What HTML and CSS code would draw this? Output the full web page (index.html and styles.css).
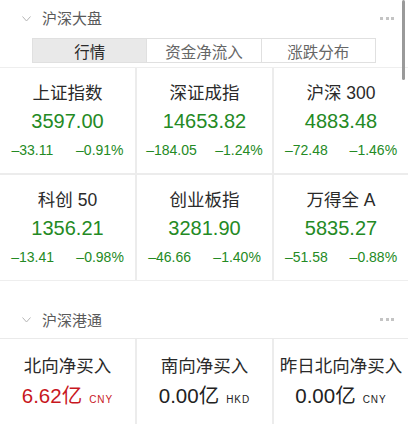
FILE: index.html
```html
<!DOCTYPE html>
<html lang="zh">
<head>
<meta charset="utf-8">
<link rel="stylesheet" href="styles.css">
</head>
<body>
<div class="page">
  <section class="panel">
    <div class="panel-head">
      <svg class="chev" width="9" height="6" viewBox="0 0 9 6"><polyline points="0.5,0.5 4.5,5 8.5,0.5" fill="none" stroke="#b5b5b5" stroke-width="1"/></svg>
      <span class="panel-title">沪深大盘</span>
      <span class="dots"><i></i><i></i><i></i></span>
    </div>
    <div class="tabs">
      <div class="tab tab--active">行情</div>
      <div class="tab">资金净流入</div>
      <div class="tab">涨跌分布</div>
    </div>
    <div class="grid">
      <div class="cell">
        <div class="cell-title">上证指数</div>
        <div class="cell-value down">3597.00</div>
        <div class="cell-change down"><span>–33.11</span><span>–0.91%</span></div>
      </div>
      <div class="cell">
        <div class="cell-title">深证成指</div>
        <div class="cell-value down">14653.82</div>
        <div class="cell-change down"><span>–184.05</span><span>–1.24%</span></div>
      </div>
      <div class="cell">
        <div class="cell-title">沪深 300</div>
        <div class="cell-value down">4883.48</div>
        <div class="cell-change down"><span>–72.48</span><span>–1.46%</span></div>
      </div>
      <div class="cell">
        <div class="cell-title">科创 50</div>
        <div class="cell-value down">1356.21</div>
        <div class="cell-change down"><span>–13.41</span><span>–0.98%</span></div>
      </div>
      <div class="cell">
        <div class="cell-title">创业板指</div>
        <div class="cell-value down">3281.90</div>
        <div class="cell-change down"><span>–46.66</span><span>–1.40%</span></div>
      </div>
      <div class="cell">
        <div class="cell-title">万得全 A</div>
        <div class="cell-value down">5835.27</div>
        <div class="cell-change down"><span>–51.58</span><span>–0.88%</span></div>
      </div>
    </div>
  </section>

  <section class="panel panel--hk">
    <div class="panel-head panel-head--hk">
      <svg class="chev" width="9" height="6" viewBox="0 0 9 6"><polyline points="0.5,0.5 4.5,5 8.5,0.5" fill="none" stroke="#b5b5b5" stroke-width="1"/></svg>
      <span class="panel-title">沪深港通</span>
      <span class="dots"><i></i><i></i><i></i></span>
    </div>
    <div class="grid grid--flow">
      <div class="cell cell--flow">
        <div class="cell-title">北向净买入</div>
        <div class="flow-value up">6.62亿<span class="unit">CNY</span></div>
      </div>
      <div class="cell cell--flow">
        <div class="cell-title">南向净买入</div>
        <div class="flow-value">0.00亿<span class="unit">HKD</span></div>
      </div>
      <div class="cell cell--flow">
        <div class="cell-title">昨日北向净买入</div>
        <div class="flow-value">0.00亿<span class="unit">CNY</span></div>
      </div>
    </div>
  </section>
  <div class="scrollbar"></div>
</div>
</body>
</html>
```
FILE: styles.css
```css
* { box-sizing: border-box; }
html, body {
  margin: 0;
  padding: 0;
  background: #fff;
}
body {
  font-family: "Liberation Sans", "Noto Sans CJK SC", sans-serif;
  color: #222;
  width: 408px;
  height: 426px;
  overflow: hidden;
}
.page {
  position: relative;
  width: 408px;
}
.panel-head {
  height: 36px;
  display: flex;
  align-items: center;
  padding-left: 22px;
  padding-right: 14px;
}
.panel-head--hk {
  height: 59px;
  padding-top: 20px;
  border-top: 1px solid #eeeeee;
  border-bottom: 1px solid #eaeaea;
}
.chev {
  display: block;
  margin-right: 11px;
  margin-top: 1px;
}
.panel-title {
  font-family: "Noto Sans CJK SC", sans-serif;
  font-size: 15px;
  color: #5a5a5a;
  line-height: 22px;
  flex: 1;
}
.dots {
  display: flex;
  gap: 2.5px;
  margin-right: 0;
}
.dots i {
  display: block;
  width: 3px;
  height: 3px;
  background: #c4c4c4;
}
.tabs {
  display: flex;
  margin: 2px 32px 4px 32px;
  height: 25px;
  border: 1px solid #e0e0e0;
}
.tab {
  flex: 1;
  display: flex;
  align-items: center;
  justify-content: center;
  font-family: "Noto Sans CJK SC", sans-serif;
  font-size: 15.5px;
  color: #666;
  border-left: 1px solid #e0e0e0;
}
.tab:first-child { border-left: none; }
.tab--active {
  background: #e9e9e9;
  color: #2a2a2a;
}
.grid {
  display: grid;
  grid-template-columns: 135px 135px 134px;
  column-gap: 2px;
  row-gap: 2px;
  background: #ececec;
  border-top: 1px solid #eeeeee;
  width: 408px;
}
.cell {
  background: #fff;
  text-align: center;
  padding: 13px 0 13px;
}
.cell-title {
  font-family: "Liberation Sans", "Noto Sans CJK SC", sans-serif;
  font-size: 17.5px;
  line-height: 24px;
  color: #2a2a2a;
}
.cell-value {
  font-size: 20px;
  line-height: 28px;
  margin-top: 2px;
}
.cell-change {
  display: flex;
  justify-content: space-around;
  font-size: 14px;
  line-height: 20px;
  margin-top: 5px;
}
.down { color: #248a24; }
.up { color: #c8171e; }
.grid--flow {
  border-top: none;
}
.cell--flow {
  padding: 15px 0 9px;
}
.flow-value {
  font-size: 20.5px;
  line-height: 30px;
  margin-top: 3px;
  color: #222;
}
.flow-value.up { color: #c8171e; }
.unit {
  font-size: 10px;
  letter-spacing: 1px;
  margin-left: 7px;
}
.scrollbar {
  position: absolute;
  top: 0;
  right: 3px;
  width: 3px;
  height: 80px;
  background: #9a9a9a;
  border-radius: 2px;
}
```
